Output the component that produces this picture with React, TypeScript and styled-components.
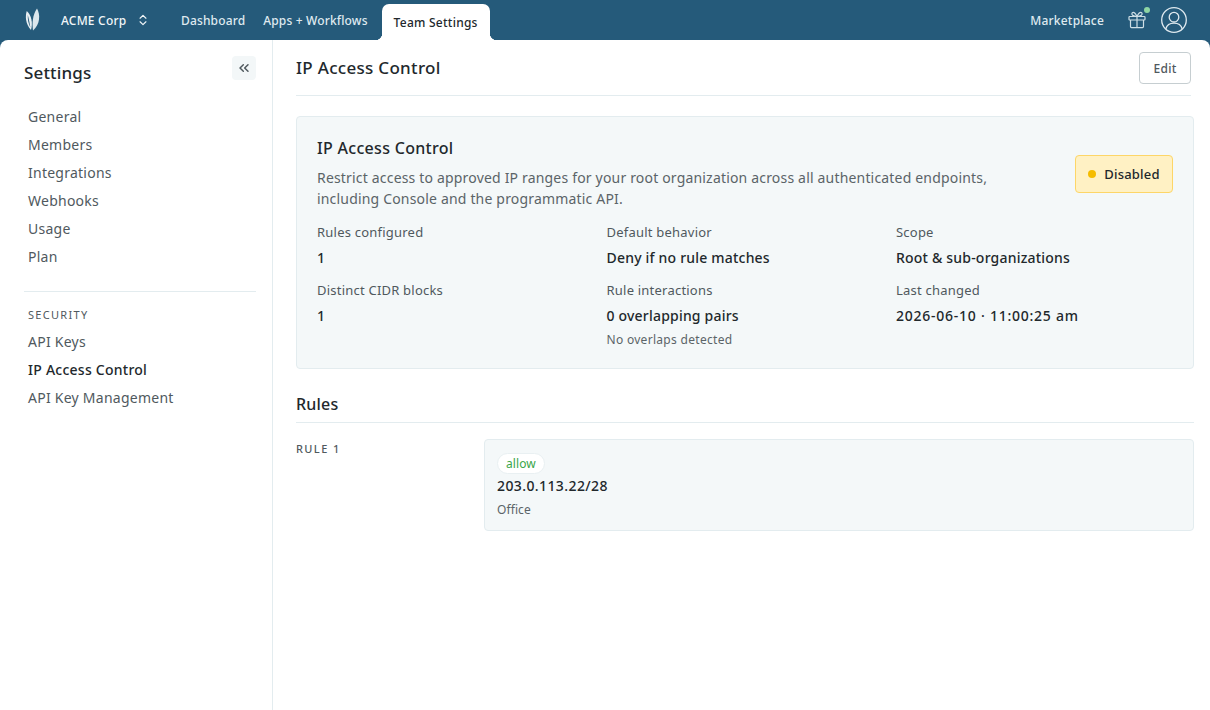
import React from 'react';
import styled, { createGlobalStyle } from 'styled-components';
import { ChevronsLeft, ChevronsUpDown } from 'lucide-react';

const GlobalStyle = createGlobalStyle`
  html, body {
    margin: 0;
    padding: 0;
    height: 100%;
    background: #255a7a;
    overflow: hidden;
  }
  * {
    box-sizing: border-box;
  }
  body {
    font-family: "Noto Sans", "Open Sans", sans-serif;
    color: #22282c;
  }
`;

const Page = styled.div`
  width: 1210px;
  height: 710px;
  display: flex;
  flex-direction: column;
`;

const TopBar = styled.header`
  height: 40px;
  flex: none;
  display: flex;
  align-items: flex-end;
  background: #255a7a;
  padding: 0 22px 0 25px;
`;

const Logo = styled.svg`
  width: 16px;
  height: 23px;
  margin: 0 20px 9px 0;
`;

const OrgSwitcher = styled.div`
  display: flex;
  align-items: center;
  gap: 10px;
  width: 120px;
  height: 100%;
  color: #f2f6f8;
  font-size: 12px;
  font-weight: 500;
  letter-spacing: 0.2px;
`;

const NavItem = styled.a`
  color: #dfe9ef;
  font-size: 12px;
  font-weight: 500;
  letter-spacing: 0.15px;
  height: 100%;
  display: flex;
  align-items: center;
  margin-right: 18px;
`;

const ActiveTab = styled.a`
  position: relative;
  height: 36px;
  width: 108px;
  margin-left: -4px;
  background: #fff;
  color: #22282c;
  border-radius: 7px 7px 0 0;
  font-size: 12px;
  font-weight: 500;
  letter-spacing: 0.25px;
  display: flex;
  align-items: center;
  justify-content: center;

  &:before,
  &:after {
    content: '';
    position: absolute;
    bottom: 0;
    width: 7px;
    height: 7px;
  }
  &:before {
    left: -7px;
    background: radial-gradient(circle at 0 0, transparent 7px, #fff 7.5px);
  }
  &:after {
    right: -7px;
    background: radial-gradient(circle at 100% 0, transparent 7px, #fff 7.5px);
  }
`;

const TopRight = styled.div`
  margin-left: auto;
  height: 100%;
  display: flex;
  align-items: center;
  color: #dfe9ef;
`;

const Marketplace = styled.a`
  font-size: 12px;
  font-weight: 500;
  letter-spacing: 0.2px;
  margin-right: 24px;
`;

const GiftWrap = styled.div`
  position: relative;
  display: flex;
  margin-right: 14px;
`;

const GiftDot = styled.span`
  position: absolute;
  top: -4px;
  right: -4px;
  width: 6px;
  height: 6px;
  border-radius: 50%;
  background: #8fd6a4;
`;

const Sheet = styled.div`
  flex: 1;
  min-height: 0;
  display: flex;
  background: #fff;
  border-radius: 8px 8px 0 0;
`;

const Sidebar = styled.aside`
  width: 273px;
  flex: none;
  border-right: 1px solid #e3ecef;
  padding: 20px 16px 0 24px;
`;

const SidebarHead = styled.div`
  display: flex;
  justify-content: space-between;
  align-items: flex-start;
  height: 42px;
`;

const SidebarTitle = styled.h2`
  margin: 0;
  font-size: 17px;
  line-height: 26px;
  font-weight: 500;
  letter-spacing: 0.15px;
  color: #22282c;
`;

const CollapseButton = styled.button`
  width: 24px;
  height: 24px;
  margin-top: -4px;
  border: 0;
  padding: 0;
  border-radius: 4px;
  background: #f3f7f8;
  color: #50595e;
  display: flex;
  align-items: center;
  justify-content: center;
`;

const NavList = styled.nav`
  display: flex;
  flex-direction: column;
  padding-left: 4px;
`;

const SideLink = styled.a<{ $active?: boolean }>`
  height: 28px;
  display: flex;
  align-items: center;
  font-size: 14px;
  letter-spacing: 0.25px;
  color: ${({ $active }) => ($active ? '#22282c' : '#50595e')};
  font-weight: ${({ $active }) => ($active ? 500 : 400)};
`;

const SideDivider = styled.div`
  height: 1px;
  background: #e3ecef;
  margin: 21px 0 16px;
`;

const SectionLabel = styled.div`
  font-size: 11px;
  line-height: 14px;
  letter-spacing: 1.3px;
  color: #50595e;
  padding-left: 4px;
  margin-bottom: 5px;
`;

const Main = styled.main`
  flex: 1;
  min-width: 0;
  padding: 12px 16px 0 23px;
`;

const MainHead = styled.div`
  display: flex;
  align-items: center;
  justify-content: space-between;
  padding-bottom: 11px;
  box-sizing: content-box;
  height: 32px;
  border-bottom: 1px solid #e3ecef;
  margin-right: 3px;
`;

const MainTitle = styled.h1`
  margin: 0 0 2px;
  font-size: 17px;
  font-weight: 500;
  letter-spacing: 0.3px;
  color: #22282c;
`;

const EditButton = styled.button`
  width: 52px;
  height: 32px;
  border: 1px solid #c6ced1;
  border-radius: 4px;
  background: #fff;
  color: #50595e;
  font-family: inherit;
  font-size: 12px;
  font-weight: 500;
  letter-spacing: 0.3px;
`;

const SummaryCard = styled.section`
  margin-top: 20px;
  background: #f4f8f9;
  border: 1px solid #e3ecef;
  border-radius: 4px;
  padding: 20px 20px 0;
  height: 253px;
`;

const SummaryTop = styled.div`
  display: flex;
  justify-content: space-between;
  align-items: center;
`;

const SummaryTitle = styled.h3`
  margin: 0 0 8px;
  font-size: 16px;
  line-height: 22px;
  font-weight: 500;
  letter-spacing: 0.3px;
  color: #22282c;
`;

const SummaryText = styled.p`
  margin: 0;
  width: 700px;
  font-size: 14px;
  line-height: 21px;
  letter-spacing: 0.18px;
  color: #5b6468;
`;

const StatusBadge = styled.div`
  width: 98px;
  height: 38px;
  margin-top: 2px;
  flex: none;
  display: flex;
  align-items: center;
  justify-content: center;
  gap: 8px;
  background: #fff1c4;
  border: 1px solid #fdd668;
  border-radius: 4px;
  font-size: 13px;
  font-weight: 500;
  letter-spacing: 0.2px;
  color: #22282c;
`;

const StatusDot = styled.span`
  width: 8px;
  height: 8px;
  border-radius: 50%;
  background: #f5bc00;
`;

const StatGrid = styled.div`
  display: grid;
  grid-template-columns: 289.5px 289.5px 1fr;
  row-gap: 12px;
  margin-top: 13px;
`;

const Stat = styled.div`
  display: flex;
  flex-direction: column;
`;

const StatLabel = styled.span`
  font-size: 13px;
  line-height: 20px;
  letter-spacing: 0.22px;
  color: #50595e;
`;

const StatValue = styled.span<{ $numeric?: boolean }>`
  margin-top: 6px;
  font-size: 14px;
  line-height: 20px;
  font-weight: 500;
  letter-spacing: ${({ $numeric }) => ($numeric ? '0.75px' : '0.2px')};
  color: #22282c;
`;

const StatNote = styled.span`
  margin-top: 5px;
  font-size: 12px;
  line-height: 18px;
  letter-spacing: 0.3px;
  color: #5b6468;
`;

const RulesTitle = styled.h3`
  margin: 24px 0 0;
  font-size: 16px;
  line-height: 22px;
  font-weight: 500;
  letter-spacing: 0.2px;
  padding-bottom: 7px;
  border-bottom: 1px solid #e3ecef;
  color: #22282c;
`;

const RuleRow = styled.div`
  display: flex;
  margin-top: 16px;
`;

const RuleLabel = styled.div`
  width: 188px;
  flex: none;
  font-size: 11px;
  line-height: 20px;
  letter-spacing: 1.4px;
  font-weight: 500;
  color: #50595e;
`;

const RuleCard = styled.div`
  flex: 1;
  height: 92px;
  background: #f4f8f9;
  border: 1px solid #e3ecef;
  border-radius: 4px;
  padding: 13px 12px 0;
  display: flex;
  flex-direction: column;
  align-items: flex-start;
`;

const ActionPill = styled.span`
  display: inline-flex;
  align-items: center;
  height: 21px;
  padding: 0 8px 1px;
  border-radius: 11px;
  background: #fff;
  border: 1px solid #e9f0f2;
  color: #3aa64a;
  font-size: 12px;
  letter-spacing: 0.1px;
`;

const RuleCidr = styled.div`
  margin-top: 1px;
  font-size: 14px;
  line-height: 22px;
  font-weight: 500;
  letter-spacing: 0.4px;
  color: #22282c;
`;

const RuleName = styled.div`
  margin-top: 4px;
  font-size: 12px;
  line-height: 18px;
  letter-spacing: 0.1px;
  color: #5b6468;
`;

const generalLinks = ['General', 'Members', 'Integrations', 'Webhooks', 'Usage', 'Plan'];

const stats = [
  { label: 'Rules configured', value: '1' },
  { label: 'Default behavior', value: 'Deny if no rule matches' },
  { label: 'Scope', value: 'Root & sub-organizations' },
  { label: 'Distinct CIDR blocks', value: '1' },
  { label: 'Rule interactions', value: '0 overlapping pairs', note: 'No overlaps detected' },
  { label: 'Last changed', value: '2026-06-10 · 11:00:25 am', numeric: true },
];

export default function App() {
  return (
    <Page>
      <GlobalStyle />
      <TopBar>
        <Logo viewBox="0 0 16 23" fill="none">
          <path d="M1.8 3C0 8 .5 16 6 22 8 15 6.5 7 1.8 3Z" fill="#e8eff3" />
          <path d="M2.8 7C2.6 11.5 3.4 15.5 5.4 19.5 4.6 15 3.9 11 2.8 7Z" fill="#255a7a" />
          <path d="M12 .5C15.5 7 15.2 16 8 22.5 7 15 7.5 7 12 .5Z" fill="#dbe6ec" />
        </Logo>
        <OrgSwitcher>
          ACME Corp
          <ChevronsUpDown size={14} strokeWidth={2} />
        </OrgSwitcher>
        <NavItem>Dashboard</NavItem>
        <NavItem>Apps + Workflows</NavItem>
        <ActiveTab>Team Settings</ActiveTab>
        <TopRight>
          <Marketplace>Marketplace</Marketplace>
          <GiftWrap>
            <svg width="18" height="18" viewBox="0 0 18 18" fill="none" stroke="#cfdfe6" strokeWidth="1.2">
              <rect x="1" y="5.5" width="16" height="3.5" rx="0.8" />
              <path d="M2.5 9v6.6a1 1 0 0 0 1 1h11a1 1 0 0 0 1-1V9" />
              <path d="M9 5.5v11" />
              <path d="M9 5.5C7.8 3 6.6 1.4 5.2 1.4 3.8 1.4 3.4 3.2 4.6 4.2 5.6 5 7.2 5.5 9 5.5Z" />
              <path d="M9 5.5c1.2-2.5 2.4-4.1 3.8-4.1 1.4 0 1.8 1.8.6 2.8-1 .8-2.6 1.3-4.4 1.3Z" />
            </svg>
            <GiftDot />
          </GiftWrap>
          <svg width="28" height="28" viewBox="0 0 28 28" fill="none" stroke="currentColor" strokeWidth="1.3">
            <circle cx="14" cy="14" r="12.3" />
            <circle cx="14" cy="11.2" r="4.8" />
            <path d="M5.8 23c1-3.8 4-5.8 8.2-5.8s7.2 2 8.2 5.8" />
          </svg>
        </TopRight>
      </TopBar>
      <Sheet>
        <Sidebar>
          <SidebarHead>
            <SidebarTitle>Settings</SidebarTitle>
            <CollapseButton>
              <ChevronsLeft size={16} strokeWidth={2.2} />
            </CollapseButton>
          </SidebarHead>
          <NavList>
            {generalLinks.map((link) => (
              <SideLink key={link}>{link}</SideLink>
            ))}
          </NavList>
          <SideDivider />
          <SectionLabel>SECURITY</SectionLabel>
          <NavList>
            <SideLink>API Keys</SideLink>
            <SideLink $active>IP Access Control</SideLink>
            <SideLink>API Key Management</SideLink>
          </NavList>
        </Sidebar>
        <Main>
          <MainHead>
            <MainTitle>IP Access Control</MainTitle>
            <EditButton>Edit</EditButton>
          </MainHead>
          <SummaryCard>
            <SummaryTop>
              <div>
                <SummaryTitle>IP Access Control</SummaryTitle>
                <SummaryText>
                  Restrict access to approved IP ranges for your root organization across all authenticated
                  endpoints, including Console and the programmatic API.
                </SummaryText>
              </div>
              <StatusBadge>
                <StatusDot />
                Disabled
              </StatusBadge>
            </SummaryTop>
            <StatGrid>
              {stats.map((stat) => (
                <Stat key={stat.label}>
                  <StatLabel>{stat.label}</StatLabel>
                  <StatValue $numeric={stat.numeric}>{stat.value}</StatValue>
                  {stat.note && <StatNote>{stat.note}</StatNote>}
                </Stat>
              ))}
            </StatGrid>
          </SummaryCard>
          <RulesTitle>Rules</RulesTitle>
          <RuleRow>
            <RuleLabel>RULE 1</RuleLabel>
            <RuleCard>
              <ActionPill>allow</ActionPill>
              <RuleCidr>203.0.113.22/28</RuleCidr>
              <RuleName>Office</RuleName>
            </RuleCard>
          </RuleRow>
        </Main>
      </Sheet>
    </Page>
  );
}
